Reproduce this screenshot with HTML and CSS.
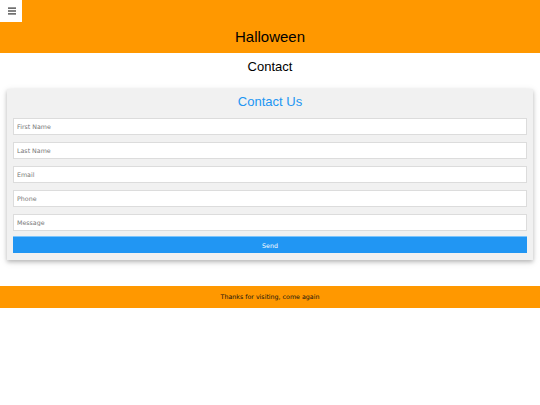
FILE: index.html
```html
<!DOCTYPE html>
<html lang="en">
<head>
<meta charset="utf-8">
<title>Contact</title>
<link rel="stylesheet" href="styles.css">
</head>
<body>
<header class="top">
  <div class="bar">
    <button class="menu-btn" aria-label="Menu">
      <svg width="8" height="8" viewBox="0 0 8 8" aria-hidden="true">
        <rect x="0" y="0.5" width="8" height="1.2" fill="#333"/>
        <rect x="0" y="3.4" width="8" height="1.2" fill="#333"/>
        <rect x="0" y="6.3" width="8" height="1.2" fill="#333"/>
      </svg>
    </button>
  </div>
  <h1 class="site-title">Halloween</h1>
</header>
<main>
  <h2 class="page-title">Contact</h2>
  <form class="card">
    <h3 class="card-title">Contact Us</h3>
    <input class="field" type="text" placeholder="First Name">
    <input class="field" type="text" placeholder="Last Name">
    <input class="field" type="text" placeholder="Email">
    <input class="field" type="text" placeholder="Phone">
    <input class="field" type="text" placeholder="Message">
    <button class="send" type="button">Send</button>
  </form>
</main>
<footer class="foot">Thanks for visiting, come again</footer>
</body>
</html>
```
FILE: styles.css
```css
html, body {
  margin: 0;
  padding: 0;
  background: #fff;
}
body {
  font-family: "DejaVu Sans", Verdana, sans-serif;
  font-size: 6.3px;
  color: #000;
}
.top {
  background: #ff9800;
  height: 53px;
  box-sizing: border-box;
}
.bar {
  height: 22px;
}
.menu-btn {
  width: 22px;
  height: 22px;
  margin: 0;
  padding: 0;
  border: 0;
  background: #fff;
  display: flex;
  align-items: center;
  justify-content: center;
}
.menu-btn svg {
  display: block;
  margin-left: 1px;
}
.site-title {
  margin: 6px 0 0;
  font-family: "Liberation Sans", Arial, sans-serif;
  font-weight: normal;
  font-size: 15px;
  line-height: 18px;
  text-align: center;
}
.page-title {
  margin: 5.5px 0 0;
  font-family: "Liberation Sans", Arial, sans-serif;
  font-weight: normal;
  font-size: 13px;
  line-height: 16px;
  text-align: center;
}
.card {
  margin: 14px 7px 0;
  padding: 5px 6px 7px;
  background: #f1f1f1;
  box-shadow: 0 2px 4px 0 rgba(0, 0, 0, 0.22), 0 2px 8px 0 rgba(0, 0, 0, 0.1);
  display: flex;
  flex-direction: column;
  gap: 7px;
}
.card-title {
  margin: 0 0 1px;
  font-family: "Liberation Sans", Arial, sans-serif;
  font-weight: normal;
  font-size: 13px;
  line-height: 16px;
  color: #2196f3;
  text-align: center;
}
.field {
  display: block;
  box-sizing: border-box;
  width: 100%;
  height: 17px;
  margin: 0;
  padding: 0 3px;
  border: 1px solid #dcdcdc;
  background: #fff;
  font-family: "DejaVu Sans", Verdana, sans-serif;
  font-size: 6.3px;
  color: #333;
}
.field::placeholder {
  color: #777;
}
.send {
  display: block;
  box-sizing: border-box;
  width: 100%;
  height: 17px;
  margin: -1.5px 0 0;
  padding: 0;
  border: 0;
  border-top: 1px solid #7cc4fb;
  background: #2196f3;
  color: #fff;
  font-family: "DejaVu Sans", Verdana, sans-serif;
  font-size: 6.3px;
}
.foot {
  margin-top: 25.5px;
  height: 22px;
  background: #ff9800;
  display: flex;
  align-items: center;
  justify-content: center;
  font-size: 6.3px;
  color: #111;
}
```
